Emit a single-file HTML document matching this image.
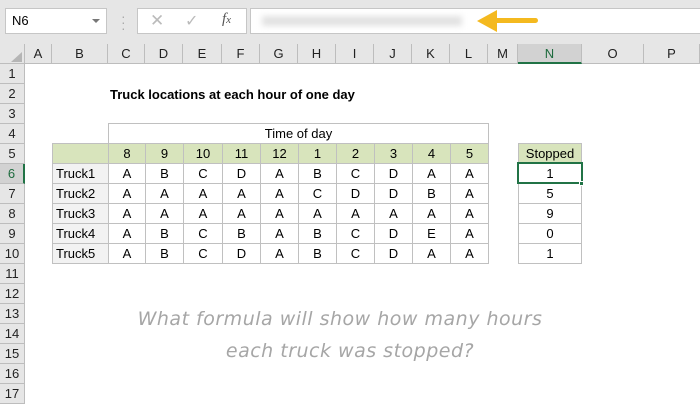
<!DOCTYPE html><html><head><style>
*{margin:0;padding:0;box-sizing:border-box}
body{width:700px;height:400px;overflow:hidden;background:#fff;font-family:"Liberation Sans",sans-serif;position:relative;font-size:13px;color:#000}
.a{position:absolute}
.ch{position:absolute;top:44px;height:20px;line-height:20px;text-align:center;border-right:1px solid #bdbdbd;border-bottom:1px solid #bdbdbd;background:#e6e6e6;font-size:13px;color:#222}
.rh{position:absolute;left:0;width:25px;height:20px;line-height:20px;text-align:center;border-bottom:1px solid #bdbdbd;border-right:1px solid #bdbdbd;background:#e6e6e6;font-size:13px;color:#222}
.c{position:absolute;height:21px;line-height:20px;text-align:center;border:1px solid #c0c0c0}
</style></head><body>
<div class="a" style="left:0;top:0;width:700px;height:44px;background:#e6e6e6"></div>
<div class="a" style="left:5px;top:8px;width:102px;height:26px;background:#fff;border:1px solid #c6c6c6;line-height:24px;padding-left:6px;font-size:13px">N6</div>
<div class="a" style="left:92px;top:19px;width:0;height:0;border-left:4px solid transparent;border-right:4px solid transparent;border-top:4px solid #777"></div>
<div class="a" style="left:121px;top:13px;color:#aaa;font-size:14px;line-height:6px">·<br>·<br>·</div>
<div class="a" style="left:137px;top:8px;width:110px;height:26px;background:#fff;border:1px solid #c6c6c6"></div>
<div class="a" style="left:150px;top:11px;color:#bbb;font-size:17px">✕</div>
<div class="a" style="left:185px;top:11px;color:#bbb;font-size:16px">✓</div>
<div class="a" style="left:222px;top:11px;color:#555;font-family:'Liberation Serif',serif;font-style:italic;font-size:15px">f<span style="font-size:11px">x</span></div>
<div class="a" style="left:250px;top:8px;width:460px;height:26px;background:#fff;border:1px solid #c6c6c6"></div>
<div class="a" style="left:262px;top:16px;width:200px;height:10px;background:#e2e2e2;filter:blur(3px)"></div>
<div class="a" style="left:490px;top:18px;width:48px;height:5px;background:#f4b91f;border-radius:3px"></div>
<div class="a" style="left:477px;top:10px;width:0;height:0;border-top:11px solid transparent;border-bottom:11px solid transparent;border-right:20px solid #f4b91f"></div>
<div class="ch" style="left:0;width:25px"></div>
<div class="a" style="left:11px;top:52px;width:0;height:0;border-left:11px solid transparent;border-bottom:10px solid #b5b5b5"></div>
<div class="ch" style="left:25px;width:27px">A</div>
<div class="ch" style="left:52px;width:56px">B</div>
<div class="ch" style="left:108px;width:37px">C</div>
<div class="ch" style="left:145px;width:38px">D</div>
<div class="ch" style="left:183px;width:39px">E</div>
<div class="ch" style="left:222px;width:38px">F</div>
<div class="ch" style="left:260px;width:38px">G</div>
<div class="ch" style="left:298px;width:38px">H</div>
<div class="ch" style="left:336px;width:38px">I</div>
<div class="ch" style="left:374px;width:38px">J</div>
<div class="ch" style="left:412px;width:38px">K</div>
<div class="ch" style="left:450px;width:38px">L</div>
<div class="ch" style="left:488px;width:30px">M</div>
<div class="ch" style="left:518px;width:64px;background:#d2d2d2;border-bottom:2px solid #217346;color:#1e6b3e">N</div>
<div class="ch" style="left:582px;width:62px">O</div>
<div class="ch" style="left:644px;width:56px">P</div>
<div class="rh" style="top:64px">1</div><div class="rh" style="top:84px">2</div><div class="rh" style="top:104px">3</div><div class="rh" style="top:124px">4</div><div class="rh" style="top:144px">5</div>
<div class="rh" style="top:164px;background:#d2d2d2;border-right:2px solid #217346;color:#1e6b3e">6</div>
<div class="rh" style="top:184px">7</div><div class="rh" style="top:204px">8</div><div class="rh" style="top:224px">9</div><div class="rh" style="top:244px">10</div><div class="rh" style="top:264px">11</div><div class="rh" style="top:284px">12</div><div class="rh" style="top:304px">13</div><div class="rh" style="top:324px">14</div><div class="rh" style="top:344px">15</div><div class="rh" style="top:364px">16</div><div class="rh" style="top:384px">17</div>
<div class="a" style="left:110px;top:87px;font-weight:bold;font-size:13px">Truck locations at each hour of one day</div>
<div class="c" style="left:108px;top:123px;width:381px;">Time of day</div>
<div id="t"></div>
<div class="c" style="left:518px;top:143px;width:64px;background:#d8e4bc">Stopped</div>
<div class="c" style="left:518px;top:163px;width:64px">1</div>
<div class="c" style="left:518px;top:183px;width:64px">5</div>
<div class="c" style="left:518px;top:203px;width:64px">9</div>
<div class="c" style="left:518px;top:223px;width:64px">0</div>
<div class="c" style="left:518px;top:243px;width:64px">1</div>
<div class="a" style="left:517px;top:162px;width:66px;height:22px;border:2px solid #217346"></div>
<div class="a" style="left:579px;top:181px;width:5px;height:5px;background:#217346;border:1px solid #fff"></div>
<div class="a" style="left:0;top:303px;width:700px;text-align:center;color:#a6a6a6;font-size:19px;line-height:32px;font-family:'DejaVu Sans',sans-serif;font-style:italic;letter-spacing:0.5px"><div style="margin-left:-20px">What formula will show how many hours</div><div>each truck was stopped?</div></div>
<script>
var xs=[52,108,145,183,222,260,298,336,374,412,450,488];
var hdr=["","8","9","10","11","12","1","2","3","4","5"];
var d=[["Truck1","A","B","C","D","A","B","C","D","A","A"],["Truck2","A","A","A","A","A","C","D","D","B","A"],["Truck3","A","A","A","A","A","A","A","A","A","A"],["Truck4","A","B","C","B","A","B","C","D","E","A"],["Truck5","A","B","C","D","A","B","C","D","A","A"]];
var h="";
for(var j=0;j<11;j++)h+='<div class="c" style="left:'+xs[j]+'px;top:143px;width:'+(xs[j+1]-xs[j]+1)+'px;background:#d8e4bc">'+hdr[j]+'</div>';
for(var i=0;i<5;i++)for(var j=0;j<11;j++){var s=j==0?'background:#f2f2f2;text-align:left;padding-left:3px;':'';h+='<div class="c" style="'+s+'left:'+xs[j]+'px;top:'+(163+20*i)+'px;width:'+(xs[j+1]-xs[j]+1)+'px">'+d[i][j]+'</div>';}
document.getElementById("t").outerHTML=h;
</script>
</body></html>
